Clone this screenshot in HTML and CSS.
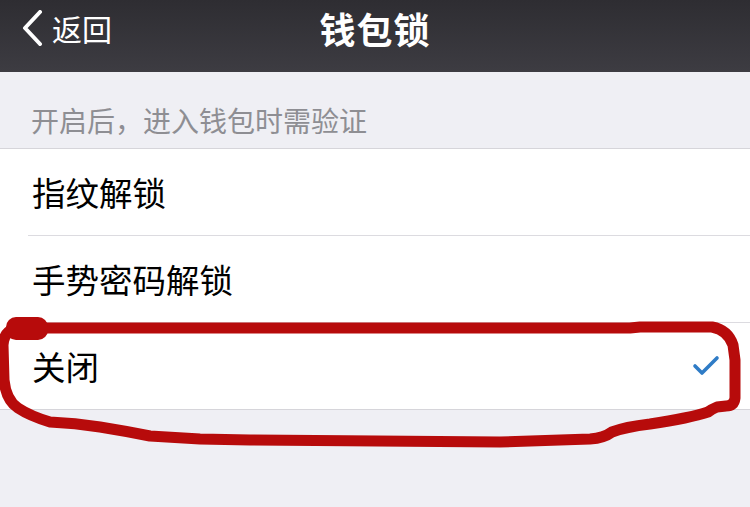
FILE: index.html
```html
<!DOCTYPE html>
<html lang="zh-CN">
<head>
    <meta charset="UTF-8">
    <meta name="viewport" content="width=device-width, initial-scale=1.0">
    <title>钱包锁</title>
    <link rel="stylesheet" href="styles.css">
</head>
<body>
    <header class="nav-bar">
        <div class="nav-back">
            <svg class="back-arrow" width="22" height="36" viewBox="0 0 22 36">
                <path d="M18 2 L3 18 L18 34" fill="none" stroke="#fff" stroke-width="4" stroke-linecap="round" stroke-linejoin="round"/>
            </svg>
            <span>返回</span>
        </div>
        <h1 class="nav-title">钱包锁</h1>
        <div></div>
    </header>

    <div class="section-label">开启后，进入钱包时需验证</div>

    <ul class="option-list">
        <li class="option-row"><div class="option-inner">指纹解锁</div></li>
        <li class="option-row"><div class="option-inner">手势密码解锁</div></li>
        <li class="option-row">
            <div class="option-inner">
                <span>关闭</span>
                <svg class="check" width="28" height="24" viewBox="0 0 28 24">
                    <path d="M3 11 L10 18 L25 3" fill="none" stroke="#2f7cc6" stroke-width="3.6" stroke-linecap="round" stroke-linejoin="round"/>
                </svg>
            </div>
        </li>
    </ul>

    <!-- marcação vermelha feita à mão por cima da tela -->
    <svg class="scribble" width="750" height="507" viewBox="0 0 750 507">
        <path d="M 45 328 L 630 328 L 640 327 L 712 327 Q 728 330 733 345 L 735 360 L 735 398 Q 734 406 726 406 L 717 407 Q 712 409 708 412 Q 690 418 650 424 Q 625 427 612 432 Q 604 438 590 439 L 500 442 L 250 440 L 200 439 L 150 436 Q 125 431 100 427 Q 75 423 50 422 Q 30 416 18 408 Q 6 400 4 380 L 3 345 Q 4 333 12 330"
              fill="none" stroke="#b70b0b" stroke-width="11" stroke-linecap="round" stroke-linejoin="round"/>
        <rect x="6" y="317" width="42" height="23" rx="10" fill="#b70b0b"/>
    </svg>
</body>
</html>
```

FILE: styles.css
```css
/* Estilos gerais */
body {
    margin: 0;
    padding: 0;
    position: relative;
    width: 750px;
    height: 507px;
    overflow: hidden;
    background-color: #efeff4;
    font-family: "Noto Sans CJK SC", "Noto Sans", sans-serif;
    color: #000;
}

/* Barra de navegação */
.nav-bar {
    height: 72px;
    box-sizing: border-box;
    padding: 8px 0 0 22px;
    display: grid;
    grid-template-columns: 1fr auto 1fr;
    align-items: start;
    background: linear-gradient(180deg, #2e2d32, #3d3c42);
    color: #fff;
}

.nav-back {
    display: flex;
    align-items: center;
    gap: 8px;
    font-size: 30px;
    line-height: 40px;
}

.back-arrow {
    display: block;
}

.nav-title {
    margin: 0;
    font-size: 36px;
    font-weight: bold;
    line-height: 40px;
    letter-spacing: 1px;
    margin-left: -22px;
}

/* Texto da seção */
.section-label {
    height: 76px;
    box-sizing: border-box;
    padding: 0 0 14px 31px;
    display: flex;
    align-items: flex-end;
    font-size: 28px;
    line-height: 1;
    color: #8e8e93;
}

/* Lista de opções */
.option-list {
    list-style: none;
    margin: 0;
    padding: 0;
    background-color: #fff;
    border-top: 1px solid #d6d5da;
    border-bottom: 1px solid #d6d5da;
}

.option-row {
    padding-left: 28px;
}

.option-inner {
    height: 86px;
    padding: 0 30px 0 4px;
    display: flex;
    align-items: center;
    justify-content: space-between;
    font-size: 33.5px;
    line-height: 1;
    border-bottom: 1px solid #dcdbe0;
}

.option-row:last-child .option-inner {
    border-bottom: none;
}

.check {
    display: block;
    margin-top: 2px;
}

/* Marcação por cima */
.scribble {
    position: absolute;
    top: 0;
    left: 0;
    pointer-events: none;
}
```
